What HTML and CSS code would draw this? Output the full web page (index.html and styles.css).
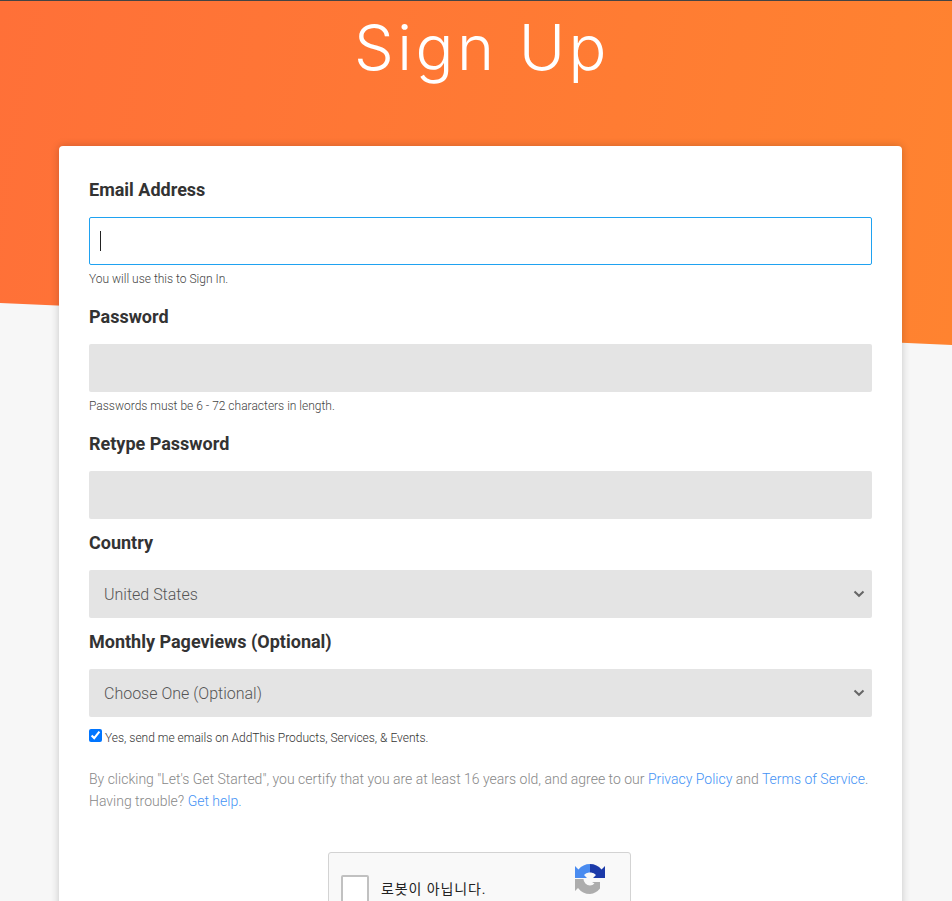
FILE: index.html
```html
<!DOCTYPE html>
<html lang="en">
<head>
  <meta charset="UTF-8">
  <meta name="viewport" content="width=device-width, initial-scale=1.0">
  <title>Sign Up</title>
  <link rel="stylesheet" href="styles.css">
</head>
<body>
  <div class="hero">
    <h1>Sign Up</h1>
  </div>

  <form class="card">
    <div class="field">
      <label for="email">Email Address</label>
      <div class="input focused" id="email"><span class="caret"></span></div>
      <p class="hint">You will use this to Sign In.</p>
    </div>
    <div class="field">
      <label for="password">Password</label>
      <input type="password" id="password">
      <p class="hint">Passwords must be 6 - 72 characters in length.</p>
    </div>
    <div class="field short">
      <label for="retype">Retype Password</label>
      <input type="password" id="retype">
    </div>
    <div class="field short">
      <label for="country">Country</label>
      <div class="select-wrap">
        <select id="country">
          <option>United States</option>
        </select>
        <svg class="chevron" width="12" height="8" viewBox="0 0 12 8"><path d="M1.5 1.5 6 5.8l4.500-4.300" fill="none" stroke="#666" stroke-width="2"/></svg>
      </div>
    </div>
    <div class="field short">
      <label for="pageviews">Monthly Pageviews (Optional)</label>
      <div class="select-wrap">
        <select id="pageviews">
          <option>Choose One (Optional)</option>
        </select>
        <svg class="chevron" width="12" height="8" viewBox="0 0 12 8"><path d="M1.5 1.5 6 5.8l4.500-4.300" fill="none" stroke="#666" stroke-width="2"/></svg>
      </div>
    </div>

    <div class="optin">
      <input type="checkbox" id="optin" checked>
      <label for="optin">Yes, send me emails on AddThis Products, Services, &amp; Events.</label>
    </div>

    <p class="terms">By clicking "Let's Get Started", you certify that you are at least 16 years old, and agree to our <a href="#">Privacy Policy</a> and <a href="#">Terms of Service</a>.<br>Having trouble? <a href="#">Get help.</a></p>

    <div class="captcha">
      <span class="captcha-box"></span>
      <span class="captcha-text">로봇이 아닙니다.</span>
      <svg class="captcha-logo" width="32" height="32" viewBox="0 0 32 32">
        <path d="M16 1A15 15 0 0 0 4.500 6.500L1 3V15H13L10 12A6.500 6.500 0 0 1 16 9.500z" fill="#4a8cf0"/>
        <path d="M16 1A15 15 0 0 1 27.500 6.500L31 3V15H19L22 12A6.500 6.500 0 0 0 16 9.500z" fill="#1c3aa9"/>
        <path d="M1 16H9.500A6.500 6.500 0 0 0 16 22.500A6.500 6.500 0 0 0 20.500 20.500L18 19H26V25.500A15 15 0 0 1 16 31A15 15 0 0 1 4 25L1 28z" fill="#adadad"/>
      </svg>
    </div>
  </form>
</body>
</html>
```

FILE: styles.css
```css
html, body {
  height: 901px;
  overflow: hidden;
}

body {
  margin: 0;
  background-color: #f7f7f7;
  font-family: Roboto, Arial, sans-serif;
  color: #333;
}

.hero {
  height: 345px;
  box-sizing: border-box;
  border-top: 1px solid #444;
  background: linear-gradient(100deg, #ff7038 0%, #ff8330 100%);
  clip-path: polygon(0 0, 100% 0, 100% 100%, 0 303px);
}

h1 {
  margin: 0;
  padding: 4px 0 0 12px;
  text-align: center;
  color: #fff;
  font-family: Inter, sans-serif;
  font-size: 63px;
  font-weight: 300;
  letter-spacing: 3.5px;
  line-height: 84px;
}

.card {
  box-sizing: border-box;
  width: 843px;
  margin: -199px 0 0 59px;
  padding: 30px;
  background: #fff;
  border-radius: 4px;
  box-shadow: 0 0 8px rgba(0, 0, 0, 0.2);
  position: relative;
}

.field {
  margin-bottom: 15px;
}

.field.short {
  margin-bottom: 10px;
}

.field > label {
  display: block;
  margin-bottom: 14px;
  font-size: 18px;
  font-weight: 700;
  line-height: 27px;
}

.field input,
.field select,
.input {
  display: block;
  box-sizing: border-box;
  width: 100%;
  height: 48px;
  border: 0;
  border-radius: 2px;
  background-color: #e4e4e4;
}

.input.focused {
  display: flex;
  align-items: center;
  padding-left: 10px;
  background: #fff;
  border: 1px solid #1fa2f1;
}

.caret {
  width: 1px;
  height: 20px;
  background: #222;
}

.hint {
  margin: 5px 0 0;
  font-size: 12px;
  font-weight: 300;
  line-height: 18px;
  color: #444;
}

.select-wrap {
  position: relative;
}

.field select {
  appearance: none;
  padding-left: 15px;
  font-family: inherit;
  font-size: 16px;
  font-weight: 300;
  color: #555;
}

.chevron {
  position: absolute;
  top: 20px;
  right: 7px;
}

.optin {
  display: flex;
  align-items: flex-start;
  margin-top: 12px;
  font-size: 12px;
  font-weight: 300;
  line-height: 18px;
  color: #333;
}

.optin input {
  width: 13px;
  height: 13px;
  margin: 0 3px 0 0;
}

.terms {
  margin: 21px 0 0;
  font-size: 14px;
  font-weight: 300;
  line-height: 22px;
  color: #888;
}

.terms a {
  color: #4593f5;
  text-decoration: none;
}

.captcha {
  box-sizing: border-box;
  display: flex;
  align-items: flex-start;
  width: 303px;
  height: 78px;
  margin: 40px 0 0 239px;
  padding: 22px 0 0 12px;
  background: #f9f9f9;
  border: 1px solid #d3d3d3;
  border-radius: 3px;
}

.captcha-box {
  box-sizing: border-box;
  width: 28px;
  height: 28px;
  background: #fff;
  border: 2px solid #c1c1c1;
  border-radius: 2px;
}

.captcha-text {
  margin: 4px 0 0 12px;
  font-family: Roboto, "Noto Sans CJK KR", sans-serif;
  font-size: 14px;
  letter-spacing: 0.9px;
  line-height: 20px;
  color: #222;
}

.captcha-logo {
  margin: -12px 24px 0 auto;
}
```
